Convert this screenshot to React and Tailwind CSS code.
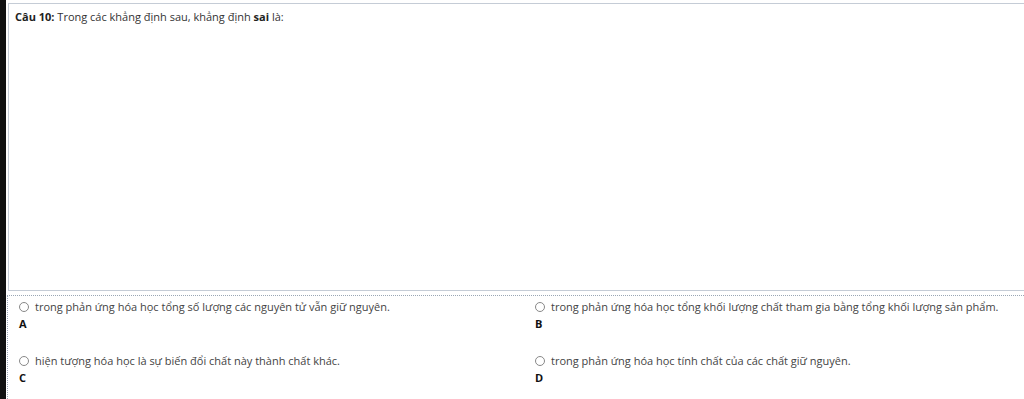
export default function App() {
  const font = { fontFamily: '"Open Sans", "Noto Sans", sans-serif' };
  const opts = [
    ["trong phản ứng hóa học tổng số lượng các nguyên tử vẫn giữ nguyên.", "A"],
    ["trong phản ứng hóa học tổng khối lượng chất tham gia bằng tổng khối lượng sản phẩm.", "B"],
    ["hiện tượng hóa học là sự biến đổi chất này thành chất khác.", "C"],
    ["trong phản ứng hóa học tính chất của các chất giữ nguyên.", "D"],
  ];
  return (
    <div className="w-[1024px] h-[399px] overflow-hidden bg-white flex" style={font}>
      <div className="w-[6px] shrink-0 bg-[#111]" />
      <div className="flex-1 flex flex-col pl-[2px] pt-[3px]">
        <div className="h-[288px] shrink-0 border border-r-0 border-[#c5ccd6] pl-[6px] pt-[5px] text-[11px] text-[#333]">
          <span className="font-bold text-[#222]">Câu 10:</span> Trong các khẳng định sau, khẳng định <span className="font-bold text-[#222]">sai</span> là:
        </div>
        <div className="mt-[4px] shrink-0 border-t border-l border-dotted border-[#9aa7b5] -ml-[1px] grid grid-cols-[516px_1fr] pt-[3px]">
          {opts.map(([t, l]) => (
            <div key={l} className="pl-[11px] h-[54px]">
              <div className="flex items-center gap-[6px] text-[11px] text-[#444] leading-[15px]">
                <span className="w-[10px] h-[10px] rounded-full border border-[#888] shrink-0" />
                <span>{t}</span>
              </div>
              <div className="mt-[3px] text-[11px] font-bold text-[#111] leading-[14px]">{l}</div>
            </div>
          ))}
        </div>
      </div>
    </div>
  );
}
